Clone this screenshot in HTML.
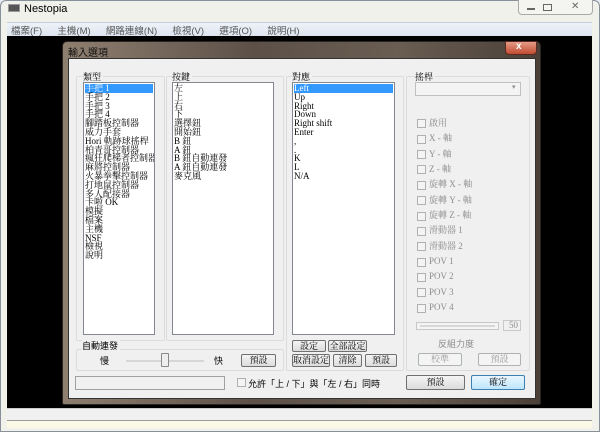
<!DOCTYPE html>
<html><head><meta charset="utf-8"><style>
*{margin:0;padding:0;box-sizing:border-box}
body{width:600px;height:432px;overflow:hidden;background:#e9edf3;font-family:"Liberation Serif","Noto Serif CJK SC","Noto Sans CJK TC",serif;font-size:9px;color:#000;position:relative}
.a{position:absolute}
.t{font-family:"Liberation Sans","Noto Sans CJK TC",sans-serif}
.list{background:#fff;border:1px solid #828790;line-height:8.8px;padding:1px 1px;white-space:nowrap;overflow:hidden}
.sel{background:#3399ff;color:#fff}
.btn{border:1px solid #707070;border-radius:2px;background:linear-gradient(#f4f4f4,#dcdcdc);text-align:center;font-size:9px;line-height:11px}
.dis{border-color:#adb2b5;color:#9a9a9a;background:#f4f4f4}
.cb{width:9px;height:9px;border:1px solid #b0b0b0;background:#f4f4f4}
.grp{border:1px solid #dcdcdc;border-radius:2px}
.gray{color:#8d8d8d}
</style></head><body>
<!-- outer window -->
<div class="a" style="left:0;top:0;width:600px;height:432px;border:1px solid #8a9099;border-radius:6px 6px 0 0;background:#f1f1ec"></div>
<div class="a t" style="left:8px;top:4px;width:12px;height:8px;background:#555;border:1px solid #999"></div>
<div class="a t" style="left:24px;top:3px;font-size:11px">Nestopia</div>
<div class="a" style="left:518px;top:0;width:75px;height:15px;border:1px solid #a9a9a9;border-top:none;border-radius:0 0 4px 4px;background:#f4f4f0"></div>
<div class="a" style="left:527px;top:8px;width:8px;height:2px;background:#666"></div>
<div class="a" style="left:543px;top:4px;width:9px;height:7px;border:1px solid #666"></div>
<div class="a t" style="left:571px;top:1px;font-size:10px;color:#666">✕</div>
<div class="a" style="left:7px;top:22px;width:585px;height:14px;background:linear-gradient(#eef2f8,#dde5f0);border-top:1px solid #c5cfdc"></div>
<div class="a t" style="left:11px;top:23px;font-size:9.5px;color:#555;word-spacing:5px;white-space:nowrap">檔案(F)&nbsp; 主機(M)&nbsp; 網路連線(N)&nbsp; 檢視(V)&nbsp; 選項(O)&nbsp; 說明(H)</div>
<div class="a" style="left:7px;top:36px;width:585px;height:372px;background:#000"></div>
<div class="a" style="left:7px;top:408px;width:585px;height:12px;background:#f0f0f0;border-top:1px solid #ccc"></div>
<div class="a" style="left:7px;top:420px;width:585px;height:8px;background:#fbf9e6;border-top:1px solid #999"></div>
<!-- dialog -->
<div class="a" style="left:62px;top:41px;width:479px;height:364px;border-radius:5px 5px 2px 2px;background:linear-gradient(90deg,#8e7f70,#5d5047 40%,#6a5d52 70%,#4a4038);border:1px solid #2a2420"></div>
<div class="a t" style="left:68px;top:44px;font-size:10px;color:#111">輸入選項</div>
<div class="a" style="left:505px;top:41px;width:32px;height:14px;border-radius:0 0 4px 4px;background:linear-gradient(#e39b86,#c24b30);border:1px solid #5a2a20"></div>
<div class="a t" style="left:516px;top:41px;color:#fff;font-size:10px;font-weight:bold">x</div>
<div class="a" style="left:68px;top:58px;width:468px;height:341px;background:#f0f0f0;border:1px solid #333"></div>
<!-- group boxes -->
<div class="a grp" style="left:76px;top:76px;width:89px;height:265px"></div>
<div class="a grp" style="left:166px;top:76px;width:118px;height:265px"></div>
<div class="a grp" style="left:286px;top:76px;width:118px;height:295px"></div>
<div class="a grp" style="left:406px;top:76px;width:124px;height:295px"></div>
<div class="a grp" style="left:76px;top:349px;width:208px;height:22px"></div>
<!-- labels -->
<div class="a" style="left:83px;top:70px;background:#f0f0f0;padding-right:2px">類型</div>
<div class="a" style="left:172px;top:70px;background:#f0f0f0;padding-right:2px">按鍵</div>
<div class="a" style="left:292px;top:70px;background:#f0f0f0;padding-right:2px">對應</div>
<div class="a" style="left:415px;top:70px;background:#f0f0f0;padding-right:2px">搖桿</div>
<!-- lists -->
<div class="a list" style="left:83px;top:82px;width:72px;height:253px"><div class="sel">手把 1</div>手把 2<br>手把 3<br>手把 4<br>腳踏板控制器<br>威力手套<br>Hori 軌跡球搖桿<br>柏青哥控制器<br>瘋狂爬梯者控制器<br>麻將控制器<br>火暴拳擊控制器<br>打地鼠控制器<br>多人配接器<br>卡啦 OK<br>模擬<br>檔案<br>主機<br>NSF<br>檢視<br>說明</div>
<div class="a list" style="left:172px;top:82px;width:102px;height:253px">左<br>上<br>右<br>下<br>選擇鈕<br>開始鈕<br>B 鈕<br>A 鈕<br>B 鈕自動連發<br>A 鈕自動連發<br>麥克風</div>
<div class="a list" style="left:292px;top:82px;width:103px;height:253px"><div class="sel">Left</div>Up<br>Right<br>Down<br>Right shift<br>Enter<br>,<br>.<br>K<br>L<br>N/A</div>
<!-- combobox -->
<div class="a" style="left:415px;top:82px;width:106px;height:14px;border:1px solid #c0c0c0;background:#f4f4f4"></div>
<div class="a gray" style="left:512px;top:83px;font-size:7px">▾</div>
<!-- checkboxes -->
<div class="a gray" style="left:417px;top:116px;line-height:15.35px">
<div><span class="cb" style="display:inline-block;vertical-align:middle;margin-right:3px"></span>啟用</div>
<div><span class="cb" style="display:inline-block;vertical-align:middle;margin-right:3px"></span>X - 軸</div>
<div><span class="cb" style="display:inline-block;vertical-align:middle;margin-right:3px"></span>Y - 軸</div>
<div><span class="cb" style="display:inline-block;vertical-align:middle;margin-right:3px"></span>Z - 軸</div>
<div><span class="cb" style="display:inline-block;vertical-align:middle;margin-right:3px"></span>旋轉 X - 軸</div>
<div><span class="cb" style="display:inline-block;vertical-align:middle;margin-right:3px"></span>旋轉 Y - 軸</div>
<div><span class="cb" style="display:inline-block;vertical-align:middle;margin-right:3px"></span>旋轉 Z - 軸</div>
<div><span class="cb" style="display:inline-block;vertical-align:middle;margin-right:3px"></span>滑動器 1</div>
<div><span class="cb" style="display:inline-block;vertical-align:middle;margin-right:3px"></span>滑動器 2</div>
<div><span class="cb" style="display:inline-block;vertical-align:middle;margin-right:3px"></span>POV 1</div>
<div><span class="cb" style="display:inline-block;vertical-align:middle;margin-right:3px"></span>POV 2</div>
<div><span class="cb" style="display:inline-block;vertical-align:middle;margin-right:3px"></span>POV 3</div>
<div><span class="cb" style="display:inline-block;vertical-align:middle;margin-right:3px"></span>POV 4</div>
</div>
<!-- force slider -->
<div class="a" style="left:416px;top:322px;width:83px;height:8px;border:1px solid #c8c8c8;background:#f4f4f4"></div>
<div class="a" style="left:420px;top:325px;width:75px;height:2px;background:#d8d8d8"></div>
<div class="a gray" style="left:503px;top:320px;width:18px;height:11px;border:1px solid #c8c8c8;text-align:right;padding-right:2px;line-height:9px">50</div>
<div class="a gray t" style="left:438px;top:337px">反組力度</div>
<div class="a btn dis" style="left:418px;top:353px;width:44px;height:13px">校準</div>
<div class="a btn dis" style="left:478px;top:353px;width:43px;height:13px">預設</div>
<!-- auto fire -->
<div class="a t" style="left:82px;top:339px;background:#f0f0f0;padding-right:2px">自動連發</div>
<div class="a t" style="left:100px;top:354px">慢</div>
<div class="a t" style="left:214px;top:354px">快</div>
<div class="a" style="left:126px;top:360px;width:78px;height:2px;background:#d6d6d6"></div>
<div class="a" style="left:161px;top:353px;width:8px;height:14px;border:1px solid #888;border-radius:1px;background:#eee"></div>
<div class="a btn" style="left:241px;top:354px;width:35px;height:13px">預設</div>
<!-- mapping buttons -->
<div class="a btn" style="left:292px;top:340px;width:34px;height:12px">設定</div>
<div class="a btn" style="left:328px;top:340px;width:39px;height:12px">全部設定</div>
<div class="a btn" style="left:292px;top:354px;width:38px;height:13px">取消設定</div>
<div class="a btn" style="left:333px;top:354px;width:29px;height:13px">清除</div>
<div class="a btn" style="left:365px;top:354px;width:32px;height:13px">預設</div>
<!-- bottom -->
<div class="a" style="left:75px;top:376px;width:150px;height:14px;border:1px solid #a0a0a0;background:#f0f0f0"></div>
<div class="a cb" style="left:237px;top:378px"></div>
<div class="a t" style="left:248px;top:377px;white-space:nowrap">允許「上 / 下」與「左 / 右」同時</div>
<div class="a btn" style="left:406px;top:375px;width:59px;height:15px;line-height:13px">預設</div>
<div class="a btn" style="left:471px;top:375px;width:54px;height:15px;line-height:13px;border-color:#3c7fb1;background:linear-gradient(#eaf6fd,#bee6fd)">確定</div>
</body></html>
